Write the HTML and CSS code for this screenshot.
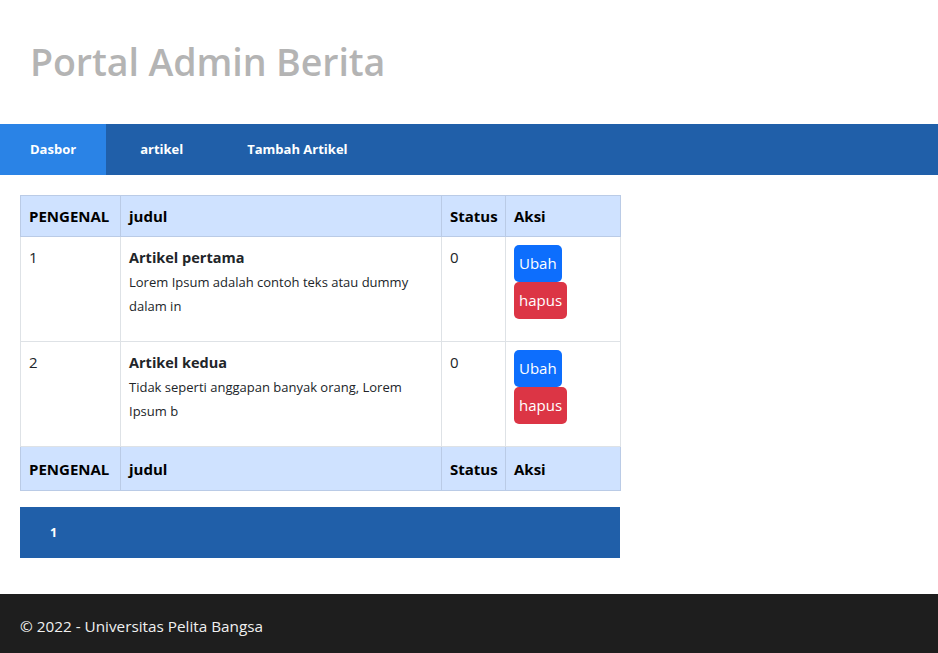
FILE: index.html
```html
<!DOCTYPE html>
<html lang="id">
<head>
<meta charset="utf-8">
<title>Portal Admin Berita</title>
<link rel="stylesheet" href="styles.css">
</head>
<body>
<header class="site-header">
  <h1 class="site-title">Portal Admin Berita</h1>
</header>
<nav class="main-nav">
  <a class="nav-link active" href="#">Dasbor</a>
  <a class="nav-link" href="#">artikel</a>
  <a class="nav-link" href="#">Tambah Artikel</a>
</nav>
<main class="content">
  <table class="data-table">
    <thead>
      <tr class="head-row">
        <th class="col-id">PENGENAL</th>
        <th class="col-title">judul</th>
        <th class="col-status">Status</th>
        <th class="col-action">Aksi</th>
      </tr>
    </thead>
    <tbody>
      <tr class="body-row">
        <td>1</td>
        <td>
          <div class="art-title">Artikel pertama</div>
          <p class="art-desc">Lorem Ipsum adalah contoh teks atau dummy dalam in</p>
        </td>
        <td>0</td>
        <td>
          <div class="actions">
            <a class="btn btn-edit" href="#">Ubah</a>
            <a class="btn btn-delete" href="#">hapus</a>
          </div>
        </td>
      </tr>
      <tr class="body-row">
        <td>2</td>
        <td>
          <div class="art-title">Artikel kedua</div>
          <p class="art-desc">Tidak seperti anggapan banyak orang, Lorem Ipsum b</p>
        </td>
        <td>0</td>
        <td>
          <div class="actions">
            <a class="btn btn-edit" href="#">Ubah</a>
            <a class="btn btn-delete" href="#">hapus</a>
          </div>
        </td>
      </tr>
    </tbody>
    <tfoot>
      <tr class="head-row foot-row">
        <th>PENGENAL</th>
        <th>judul</th>
        <th>Status</th>
        <th>Aksi</th>
      </tr>
    </tfoot>
  </table>
  <div class="pagination">
    <a class="page-link" href="#">1</a>
  </div>
</main>
<footer class="site-footer">
  <p class="footer-text">© 2022 - Universitas Pelita Bangsa</p>
</footer>
</body>
</html>
```

FILE: styles.css
```css
* { box-sizing: border-box; }
html, body { margin: 0; padding: 0; }
body {
  font-family: "Open Sans", "Noto Sans", "DejaVu Sans", sans-serif;
  color: #212529;
  background: #fff;
}
a { text-decoration: none; }

.site-header {
  height: 124px;
  padding: 36px 30px 0;
}
.site-title {
  margin: 0;
  font-size: 37.6px;
  font-weight: 600;
  line-height: 52px;
  color: #b4b4b4;
  letter-spacing: -0.1px;
}

.main-nav {
  display: flex;
  gap: 4px;
  height: 51px;
  background: #205fa9;
}
.nav-link {
  display: block;
  padding: 0 30px;
  line-height: 51px;
  color: #fff;
  font-size: 13px;
  font-weight: 700;
}
.nav-link.active { background: #2a83e6; }

.content {
  padding: 20px 20px 36px;
}
.data-table {
  width: 600px;
  border-collapse: collapse;
  font-size: 15px;
  table-layout: fixed;
}
.col-id { width: 100px; }
.col-title { width: 321px; }
.col-status { width: 64px; }
.col-action { width: 115px; }

.data-table th,
.data-table td {
  border: 1px solid #dee2e6;
  padding: 8px;
  text-align: left;
  vertical-align: top;
}
.head-row th {
  background: #cfe2ff;
  border-color: #bacbe6;
  color: #000;
  font-weight: 700;
  font-size: 15px;
  line-height: 24px;
  height: 41px;
  vertical-align: middle;
  white-space: nowrap;
}
.foot-row th { height: 44px; }
.body-row td {
  height: 105px;
  line-height: 24px;
  color: #212529;
}
.art-title {
  font-weight: 700;
  font-size: 14.5px;
  line-height: 25px;
}
.art-desc {
  margin: 0;
  font-size: 13px;
  line-height: 24px;
}
.actions {
  display: flex;
  flex-direction: column;
  align-items: flex-start;
}
.btn {
  display: inline-block;
  padding: 6px 5px;
  font-size: 15px;
  line-height: 25px;
  color: #fff;
  border-radius: 5px;
}
.btn-edit { background: #0d6efd; }
.btn-delete { background: #dc3545; }

.pagination {
  width: 600px;
  margin-top: 16px;
  height: 51px;
  background: #205fa9;
  display: flex;
}
.page-link {
  padding: 0 30px;
  line-height: 51px;
  color: #fff;
  font-weight: 700;
  font-size: 12.5px;
}

.site-footer {
  background: #1e1e1e;
  height: 59px;
  padding: 4px 20px 0;
  display: flex;
  align-items: center;
}
.footer-text {
  margin: 0;
  color: #f0f0f0;
  font-size: 15.3px;
}
```
